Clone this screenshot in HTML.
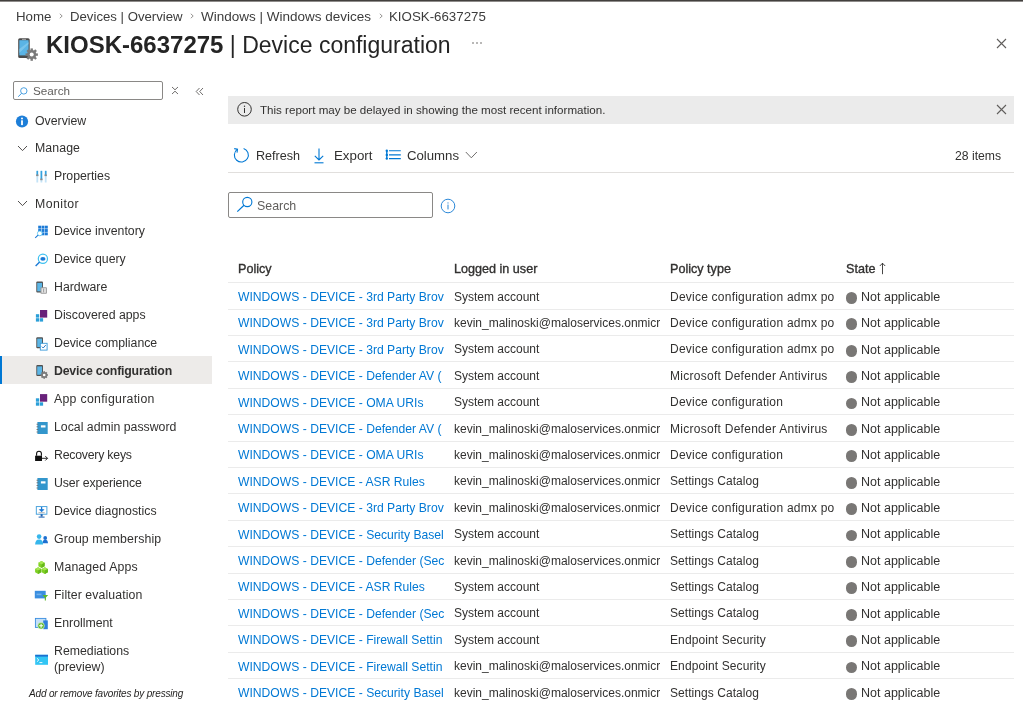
<!DOCTYPE html>
<html><head><meta charset="utf-8"><style>
html,body{-webkit-font-smoothing:antialiased;margin:0;padding:0;background:#fff;width:1023px;height:702px;overflow:hidden;position:relative;font-family:"Liberation Sans", sans-serif}
.t{will-change:transform;position:absolute;white-space:nowrap;line-height:1;font-family:"Liberation Sans", sans-serif}
svg{overflow:visible}
</style></head><body>
<div style="position:absolute;left:0px;top:0px;width:1023px;height:1px;background:#42403e;"></div>
<div style="position:absolute;left:0px;top:1px;width:1023px;height:1px;background:#8e8c8a;"></div>
<div class="t" style="left:16.40px;top:9.94px;font-size:13.3px;line-height:1.0;color:#3c3c3c;font-weight:normal;">Home</div>
<div class="t" style="left:70.20px;top:10.03px;font-size:13.2px;line-height:1.0;color:#3c3c3c;font-weight:normal;">Devices | Overview</div>
<div class="t" style="left:201.30px;top:9.77px;font-size:13.5px;line-height:1.0;color:#3c3c3c;font-weight:normal;">Windows | Windows devices</div>
<div class="t" style="left:389.00px;top:9.94px;font-size:13.3px;line-height:1.0;color:#3c3c3c;font-weight:normal;">KIOSK-6637275</div>
<svg style="position:absolute;left:57.5px;top:12px" width="6" height="8" viewBox="0 0 6 8"><path d="M1.8 1.8 L4.2 4 L1.8 6.2" fill="none" stroke="#8a8886" stroke-width="0.9"/></svg>
<svg style="position:absolute;left:189px;top:12px" width="6" height="8" viewBox="0 0 6 8"><path d="M1.8 1.8 L4.2 4 L1.8 6.2" fill="none" stroke="#8a8886" stroke-width="0.9"/></svg>
<svg style="position:absolute;left:377.5px;top:12px" width="6" height="8" viewBox="0 0 6 8"><path d="M1.8 1.8 L4.2 4 L1.8 6.2" fill="none" stroke="#8a8886" stroke-width="0.9"/></svg>
<div class="t" style="left:45.60px;top:33.33px;font-size:23.0px;line-height:1.0;color:#242424;font-weight:normal;"><b style="font-size:24px">KIOSK-6637275</b> | Device configuration</div>
<svg style="position:absolute;left:470px;top:40px" width="14" height="6" viewBox="0 0 14 6"><circle cx="3" cy="3" r="0.8" fill="#605e5c"/><circle cx="7" cy="3" r="0.8" fill="#605e5c"/><circle cx="11" cy="3" r="0.8" fill="#605e5c"/></svg>
<svg style="position:absolute;left:996px;top:38px" width="11" height="11" viewBox="0 0 11 11"><path d="M1 1 L10 10 M10 1 L1 10" stroke="#605e5c" stroke-width="1.1" fill="none"/></svg>
<svg style="position:absolute;left:16px;top:36px" width="18" height="24" viewBox="0 0 18 24">
<rect x="2.2" y="2.2" width="11.5" height="19.8" rx="1.6" fill="#4a4a4a"/>
<rect x="3.3" y="4.2" width="9.3" height="15.2" fill="#5ab4e5"/>
<path d="M3.3 13 L12.6 6 L12.6 8 L3.3 17 Z" fill="#8fd0f0" opacity="0.6"/>
<rect x="6" y="2.9" width="4" height="0.8" fill="#bbb"/>
<g transform="translate(15.7,18.6)">
<circle r="4.6" fill="#7a7a7a"/>
<g fill="#7a7a7a"><rect x="-1.2" y="-6.2" width="2.4" height="12.4"/><rect x="-1.2" y="-6.2" width="2.4" height="12.4" transform="rotate(45)"/><rect x="-1.2" y="-6.2" width="2.4" height="12.4" transform="rotate(90)"/><rect x="-1.2" y="-6.2" width="2.4" height="12.4" transform="rotate(135)"/></g>
<circle r="2" fill="#fff"/>
</g></svg>
<div style="position:absolute;left:13px;top:81px;width:149.5px;height:19px;background:#fff;box-sizing:border-box;border:1px solid #8a8886;border-radius:2px"></div>
<svg style="position:absolute;left:17px;top:84px" width="12" height="13" viewBox="0 0 12 13"><circle cx="6.8" cy="6.9" r="3.2" fill="none" stroke="#3a96dd" stroke-width="0.9"/><path d="M4.6 9.3 L1.2 12.7" stroke="#3a96dd" stroke-width="1"/></svg>
<div class="t" style="left:32.90px;top:85.30px;font-size:11.7px;line-height:1.0;color:#605e5c;font-weight:normal;">Search</div>
<svg style="position:absolute;left:171px;top:86px" width="8" height="9" viewBox="0 0 8 9"><path d="M1 1 L4 3.8 L7 1 M1 8 L4 5.2 L7 8" fill="none" stroke="#605e5c" stroke-width="0.9"/></svg>
<svg style="position:absolute;left:195px;top:87px" width="9" height="9" viewBox="0 0 9 9"><path d="M4.5 1 L1.2 4.5 L4.5 8 M8 1 L4.7 4.5 L8 8" fill="none" stroke="#605e5c" stroke-width="0.9"/></svg>
<div class="t" style="left:35.20px;top:115.39px;font-size:12.3px;line-height:1.0;color:#323130;font-weight:normal;">Overview</div>
<svg style="position:absolute;left:15px;top:115px" width="14" height="14" viewBox="0 0 14 14"><circle cx="7" cy="6.5" r="6.1" fill="#1d7ed8"/><rect x="6.1" y="5.3" width="1.8" height="4.8" fill="#fff"/><circle cx="7" cy="3.6" r="1" fill="#fff"/></svg>
<div class="t" style="left:35.00px;top:142.49px;font-size:12.3px;line-height:1.0;color:#323130;font-weight:normal;letter-spacing:0.1px">Manage</div>
<svg style="position:absolute;left:17px;top:145px" width="11" height="7" viewBox="0 0 11 7"><path d="M1 1 L5.5 5.6 L10 1" fill="none" stroke="#484644" stroke-width="0.95"/></svg>
<div class="t" style="left:35.00px;top:197.59px;font-size:12.3px;line-height:1.0;color:#323130;font-weight:normal;letter-spacing:0.45px">Monitor</div>
<svg style="position:absolute;left:17px;top:200px" width="11" height="7" viewBox="0 0 11 7"><path d="M1 1 L5.5 5.6 L10 1" fill="none" stroke="#484644" stroke-width="0.95"/></svg>
<div style="position:absolute;left:0px;top:356px;width:212px;height:28px;background:#edebe9;"></div>
<div style="position:absolute;left:0px;top:356px;width:2.2px;height:28px;background:#0078d4;"></div>
<div class="t" style="left:54.30px;top:170.39px;font-size:12.3px;line-height:1.0;color:#323130;font-weight:normal;letter-spacing:0px">Properties</div>
<div class="t" style="left:54.30px;top:225.39px;font-size:12.3px;line-height:1.0;color:#323130;font-weight:normal;letter-spacing:0px">Device inventory</div>
<div class="t" style="left:54.30px;top:253.39px;font-size:12.3px;line-height:1.0;color:#323130;font-weight:normal;letter-spacing:0px">Device query</div>
<div class="t" style="left:54.30px;top:281.39px;font-size:12.3px;line-height:1.0;color:#323130;font-weight:normal;letter-spacing:0px">Hardware</div>
<div class="t" style="left:54.30px;top:309.39px;font-size:12.3px;line-height:1.0;color:#323130;font-weight:normal;letter-spacing:0px">Discovered apps</div>
<div class="t" style="left:54.30px;top:337.39px;font-size:12.3px;line-height:1.0;color:#323130;font-weight:normal;letter-spacing:0px">Device compliance</div>
<div class="t" style="left:54.30px;top:365.39px;font-size:12.3px;line-height:1.0;color:#323130;font-weight:bold;letter-spacing:-0.18px">Device configuration</div>
<div class="t" style="left:54.30px;top:393.39px;font-size:12.3px;line-height:1.0;color:#323130;font-weight:normal;letter-spacing:0.29px">App configuration</div>
<div class="t" style="left:54.30px;top:421.39px;font-size:12.3px;line-height:1.0;color:#323130;font-weight:normal;letter-spacing:0px">Local admin password</div>
<div class="t" style="left:54.30px;top:449.39px;font-size:12.3px;line-height:1.0;color:#323130;font-weight:normal;letter-spacing:-0.22px">Recovery keys</div>
<div class="t" style="left:54.30px;top:477.39px;font-size:12.3px;line-height:1.0;color:#323130;font-weight:normal;letter-spacing:-0.12px">User experience</div>
<div class="t" style="left:54.30px;top:505.39px;font-size:12.3px;line-height:1.0;color:#323130;font-weight:normal;letter-spacing:0px">Device diagnostics</div>
<div class="t" style="left:54.30px;top:533.39px;font-size:12.3px;line-height:1.0;color:#323130;font-weight:normal;letter-spacing:0.13px">Group membership</div>
<div class="t" style="left:54.30px;top:561.39px;font-size:12.3px;line-height:1.0;color:#323130;font-weight:normal;letter-spacing:0.15px">Managed Apps</div>
<div class="t" style="left:54.30px;top:589.39px;font-size:12.3px;line-height:1.0;color:#323130;font-weight:normal;letter-spacing:0.09px">Filter evaluation</div>
<div class="t" style="left:54.30px;top:617.39px;font-size:12.3px;line-height:1.0;color:#323130;font-weight:normal;letter-spacing:0px">Enrollment</div>
<div class="t" style="left:54.30px;top:645.09px;font-size:12.3px;line-height:1.0;color:#323130;font-weight:normal;">Remediations</div>
<div class="t" style="left:54.30px;top:661.09px;font-size:12.3px;line-height:1.0;color:#323130;font-weight:normal;">(preview)</div>
<div class="t" style="left:29.40px;top:688.53px;font-size:10.0px;line-height:1.0;color:#201f1e;font-weight:normal;font-style:italic;letter-spacing:-0.17px">Add or remove favorites by pressing</div>
<svg style="position:absolute;left:0;top:0" width="220" height="702" viewBox="0 0 220 702"><rect x="36.4" y="171" width="1.8" height="11.5" fill="#c4e3f7"/><rect x="36.5" y="170.8" width="1.6" height="4.199999999999989" fill="#34a2de"/><rect x="36.099999999999994" y="174.5" width="2.4" height="1.6" fill="#8c8c8c"/><rect x="40.5" y="171" width="1.8" height="11.5" fill="#c4e3f7"/><rect x="40.6" y="170.8" width="1.6" height="8.299999999999983" fill="#34a2de"/><rect x="40.199999999999996" y="178.6" width="2.4" height="1.6" fill="#8c8c8c"/><rect x="44.800000000000004" y="171" width="1.8" height="11.5" fill="#c4e3f7"/><rect x="44.900000000000006" y="170.8" width="1.6" height="4.199999999999989" fill="#34a2de"/><rect x="44.5" y="174.5" width="2.4" height="1.6" fill="#8c8c8c"/><rect x="38.20" y="225.70" width="2.9" height="2.9" fill="#1c7ad6"/><rect x="38.20" y="229.05" width="2.9" height="2.9" fill="#1c7ad6"/><rect x="38.20" y="232.40" width="2.9" height="2.9" fill="#1c7ad6"/><rect x="41.55" y="225.70" width="2.9" height="2.9" fill="#1c7ad6"/><rect x="41.55" y="229.05" width="2.9" height="2.9" fill="#1c7ad6"/><rect x="41.55" y="232.40" width="2.9" height="2.9" fill="#1c7ad6"/><rect x="44.90" y="225.70" width="2.9" height="2.9" fill="#1c7ad6"/><rect x="44.90" y="229.05" width="2.9" height="2.9" fill="#1c7ad6"/><rect x="44.90" y="232.40" width="2.9" height="2.9" fill="#1c7ad6"/><circle cx="39.8" cy="233.4" r="2.4" fill="#fff" stroke="#50c0f0" stroke-width="0.8"/><path d="M38.1 235.1 L35.2 237.8" stroke="#1c7ad6" stroke-width="1.1"/><circle cx="42.9" cy="258.7" r="4.6" fill="#fff" stroke="#3fc1f0" stroke-width="1.2"/><ellipse cx="42.9" cy="258.9" rx="2.6" ry="1.8" fill="#1c7ad6"/><path d="M39.6 262.1 L35.6 266.1" stroke="#1c7ad6" stroke-width="1.4"/><rect x="36.3" y="281.5" width="6.7" height="11" rx="1" fill="#505050"/><rect x="37.199999999999996" y="282.9" width="4.9" height="8.4" fill="#5cb6e6"/><rect x="40.5" y="287.2" width="6.4" height="6.6" rx="0.8" fill="#9a9a9a"/><rect x="41.5" y="288.2" width="4.4" height="4.6" fill="#e6e6e6"/><rect x="43.3" y="288.6" width="0.8" height="3.8" fill="#888"/><rect x="40" y="310" width="7.2" height="7.6" fill="#68217a"/><rect x="35.9" y="314.2" width="3.3" height="3.4" fill="#2b9fd8"/><rect x="35.9" y="318.2" width="3.3" height="3.4" fill="#2b9fd8"/><rect x="39.8" y="318.2" width="3.3" height="3.4" fill="#2b9fd8"/><rect x="36.3" y="337.2" width="6.7" height="11" rx="1" fill="#505050"/><rect x="37.199999999999996" y="338.59999999999997" width="4.9" height="8.4" fill="#5cb6e6"/><rect x="40.3" y="343.3" width="6.8" height="6.8" fill="#fff" stroke="#3a9ad9" stroke-width="0.9"/><path d="M41.8 346.6 L43.2 348 L45.8 345" fill="none" stroke="#1c6fc0" stroke-width="0.9"/><rect x="36.3" y="365" width="6.7" height="11" rx="1" fill="#505050"/><rect x="37.199999999999996" y="366.4" width="4.9" height="8.4" fill="#5cb6e6"/><g transform="translate(44.2,375)" fill="#7a7a7a"><circle r="2.9"/><rect x="-0.81" y="-3.77" width="1.62" height="7.54" transform="rotate(0)"/><rect x="-0.81" y="-3.77" width="1.62" height="7.54" transform="rotate(45)"/><rect x="-0.81" y="-3.77" width="1.62" height="7.54" transform="rotate(90)"/><rect x="-0.81" y="-3.77" width="1.62" height="7.54" transform="rotate(135)"/><circle r="1.30" fill="#fff"/></g><rect x="40" y="394.1" width="7.2" height="7.6" fill="#68217a"/><rect x="35.9" y="398.3" width="3.3" height="3.4" fill="#2b9fd8"/><rect x="35.9" y="402.3" width="3.3" height="3.4" fill="#2b9fd8"/><rect x="39.8" y="402.3" width="3.3" height="3.4" fill="#2b9fd8"/><g transform="translate(0.6,0)"><rect x="36.8" y="422" width="10.3" height="12" fill="#3396cc"/><rect x="40.3" y="425.3" width="4.6" height="2.2" fill="#fff"/><rect x="35.9" y="423.80" width="1.8" height="0.8" fill="#666"/><rect x="35.9" y="426.40" width="1.8" height="0.8" fill="#666"/><rect x="35.9" y="429.00" width="1.8" height="0.8" fill="#666"/><rect x="35.9" y="431.60" width="1.8" height="0.8" fill="#666"/></g><path d="M36.6 455.8 L36.6 453.6 A2.4 2.4 0 0 1 41.4 453.6 L41.4 455.8" fill="none" stroke="#111" stroke-width="1.1"/><rect x="35.1" y="455.7" width="6.9" height="5.3" fill="#111"/><path d="M41 458.3 L47.5 458.3 M45.3 456.1 L47.5 458.3 L45.3 460.5" fill="none" stroke="#111" stroke-width="0.9"/><g transform="translate(0.6,0)"><rect x="36.8" y="478" width="10.3" height="12" fill="#3396cc"/><rect x="40.3" y="481.3" width="4.6" height="2.2" fill="#fff"/><rect x="35.9" y="479.80" width="1.8" height="0.8" fill="#666"/><rect x="35.9" y="482.40" width="1.8" height="0.8" fill="#666"/><rect x="35.9" y="485.00" width="1.8" height="0.8" fill="#666"/><rect x="35.9" y="487.60" width="1.8" height="0.8" fill="#666"/></g><rect x="36.3" y="506.6" width="10.6" height="7.6" fill="#fff" stroke="#3a9ad9" stroke-width="0.9"/><path d="M41.6 507 L41.6 511.2" stroke="#1c7ad6" stroke-width="1.3"/><path d="M39.4 509.6 L41.6 511.8 L43.8 509.6 Z" fill="#1c7ad6" stroke="#1c7ad6" stroke-width="0.8"/><rect x="38.5" y="512.4" width="6.2" height="0.7" fill="#999"/><rect x="40.6" y="514.2" width="2" height="2.4" fill="#1c5fb0"/><rect x="38.6" y="516.6" width="6" height="1" fill="#1c5fb0"/><circle cx="45.2" cy="538" r="1.9" fill="#1c6fd0"/><path d="M42.4 543.2 Q42.6 539.8 45.2 539.8 Q47.9 539.8 48 543.2 Z" fill="#1c6fd0"/><circle cx="39.1" cy="536.6" r="2.3" fill="#36b6ec"/><path d="M35.1 544.6 Q35.2 539.4 39.1 539.4 Q43 539.4 43.1 544.6 Z" fill="#36b6ec"/><path d="M41.5 561.1 L44.6 562.8000000000001 L44.6 566.1999999999999 L41.5 567.9 L38.4 566.1999999999999 L38.4 562.8000000000001 Z" fill="#7fd024"/><path d="M41.5 561.1 L44.6 562.8000000000001 L41.5 564.5 L38.4 562.8000000000001 Z" fill="#a6e652"/><path d="M44.6 562.8000000000001 L44.6 566.1999999999999 L41.5 567.9 L41.5 564.5 Z" fill="#66b81a"/><path d="M38.2 567.2 L41.300000000000004 568.9000000000001 L41.300000000000004 572.3 L38.2 574.0 L35.1 572.3 L35.1 568.9000000000001 Z" fill="#7fd024"/><path d="M38.2 567.2 L41.300000000000004 568.9000000000001 L38.2 570.6 L35.1 568.9000000000001 Z" fill="#a6e652"/><path d="M41.300000000000004 568.9000000000001 L41.300000000000004 572.3 L38.2 574.0 L38.2 570.6 Z" fill="#66b81a"/><path d="M44.800000000000004 567.2 L47.900000000000006 568.9000000000001 L47.900000000000006 572.3 L44.800000000000004 574.0 L41.7 572.3 L41.7 568.9000000000001 Z" fill="#7fd024"/><path d="M44.800000000000004 567.2 L47.900000000000006 568.9000000000001 L44.800000000000004 570.6 L41.7 568.9000000000001 Z" fill="#a6e652"/><path d="M47.900000000000006 568.9000000000001 L47.900000000000006 572.3 L44.800000000000004 574.0 L44.800000000000004 570.6 Z" fill="#66b81a"/><rect x="34.8" y="590.8" width="10.9" height="7.6" fill="#3a8ee0"/><rect x="36.5" y="593.6" width="5" height="1.6" fill="#8cc0f0" opacity="0.7"/><path d="M42.5 595 L48.2 595 L45.9 597.6 L45.9 600.4 L44.8 600.4 L44.8 597.6 Z" fill="#5cb82a"/><g transform="translate(0.6,0.6)"><rect x="34.8" y="617.8" width="10.5" height="9" fill="#c4e0f8" stroke="#3a8ee0" stroke-width="0.9"/><rect x="42.6" y="619.8" width="4.6" height="8.8" fill="#2f80dc"/><circle cx="40.5" cy="625.2" r="3.3" fill="#5cb82a" stroke="#e8f5e0" stroke-width="0.6"/><path d="M40.5 623.2 L40.5 627.2 M38.5 625.2 L42.5 625.2" stroke="#fff" stroke-width="1.1"/></g><rect x="35.2" y="654.8" width="12.8" height="10" fill="#32c5f4"/><rect x="35.2" y="654.8" width="12.8" height="1.8" fill="#1c6fd0"/><path d="M36.9 658.2 L38.8 660 L36.9 661.8 M39.4 662.6 L42.4 662.6" fill="none" stroke="#fff" stroke-width="0.9"/></svg>
<div style="position:absolute;left:228px;top:96px;width:786px;height:28px;background:#ebebeb;"></div>
<svg style="position:absolute;left:236px;top:101px" width="17" height="17" viewBox="0 0 17 17"><circle cx="8.5" cy="8.3" r="6.8" fill="none" stroke="#323130" stroke-width="1"/><rect x="8" y="7" width="1" height="5" fill="#323130"/><circle cx="8.5" cy="5.3" r="0.7" fill="#323130"/></svg>
<div class="t" style="left:259.60px;top:104.38px;font-size:11.6px;line-height:1.0;color:#323130;font-weight:normal;">This report may be delayed in showing the most recent information.</div>
<svg style="position:absolute;left:996px;top:104px" width="11" height="11" viewBox="0 0 11 11"><path d="M1 1 L10 10 M10 1 L1 10" stroke="#605e5c" stroke-width="1.1" fill="none"/></svg>
<svg style="position:absolute;left:232.3px;top:146.3px" width="18" height="17" viewBox="0 0 18 17"><path d="M5.2 3.4 A7 7 0 1 0 11.6 2.4" fill="none" stroke="#0078d4" stroke-width="1.1"/><path d="M2.2 2.6 L5.5 3.3 L5 6.6" fill="none" stroke="#0078d4" stroke-width="1.1"/></svg>
<div class="t" style="left:255.80px;top:149.83px;font-size:12.6px;line-height:1.0;color:#323130;font-weight:normal;">Refresh</div>
<svg style="position:absolute;left:312px;top:146.5px" width="14" height="17" viewBox="0 0 14 17"><path d="M7 1.5 L7 13 M2.8 8.8 L7 13 L11.2 8.8" fill="none" stroke="#0078d4" stroke-width="1.1"/><path d="M2.5 15.8 L11.5 15.8" stroke="#0078d4" stroke-width="1.1"/></svg>
<div class="t" style="left:333.80px;top:149.24px;font-size:13.3px;line-height:1.0;color:#323130;font-weight:normal;">Export</div>
<svg style="position:absolute;left:384px;top:148px" width="18" height="13" viewBox="0 0 18 13"><path d="M5 2.8 L16.8 2.8 M5 6.9 L16.8 6.9 M5 10.6 L16.8 10.6" stroke="#0078d4" stroke-width="1.1"/><circle cx="2.8" cy="2.8" r="1.2" fill="#0078d4"/><circle cx="2.8" cy="6.9" r="1.2" fill="#0078d4"/><circle cx="2.8" cy="10.6" r="1.2" fill="#0078d4"/><path d="M2.8 2.8 L2.8 10.6" stroke="#0078d4" stroke-width="1.4"/></svg>
<div class="t" style="left:407.30px;top:149.03px;font-size:13.2px;line-height:1.0;color:#323130;font-weight:normal;">Columns</div>
<svg style="position:absolute;left:464px;top:150px" width="14" height="9" viewBox="0 0 14 9"><path d="M1.8 2 L7.3 7.8 L12.9 2" fill="none" stroke="#605e5c" stroke-width="0.9"/></svg>
<div class="t" style="left:955.00px;top:149.67px;font-size:12.2px;line-height:1.0;color:#323130;font-weight:normal;">28 items</div>
<div style="position:absolute;left:228px;top:172px;width:786px;height:1px;background:#e1dfdd;"></div>
<div style="position:absolute;left:228px;top:192px;width:205px;height:26px;background:#fff;box-sizing:border-box;border:1px solid #8a8886;border-radius:2px"></div>
<svg style="position:absolute;left:236px;top:196px" width="18" height="17" viewBox="0 0 18 17"><circle cx="11.3" cy="6" r="4.6" fill="none" stroke="#0078d4" stroke-width="1.1"/><path d="M8 9.3 L1.3 15.6" stroke="#0078d4" stroke-width="1.2"/></svg>
<div class="t" style="left:257.30px;top:200.10px;font-size:12.4px;line-height:1.0;color:#605e5c;font-weight:normal;">Search</div>
<svg style="position:absolute;left:440px;top:197.5px" width="16" height="16" viewBox="0 0 16 16"><circle cx="8" cy="8" r="6.8" fill="none" stroke="#2b88d8" stroke-width="1"/><rect x="7.5" y="6.6" width="1" height="4.8" fill="#2b88d8"/><circle cx="8" cy="4.9" r="0.6" fill="#2b88d8"/></svg>
<div class="t" style="left:238.10px;top:263.13px;font-size:12.6px;line-height:1.0;color:#323130;font-weight:normal;-webkit-text-stroke:0.35px #323130">Policy</div>
<div class="t" style="left:454.00px;top:263.13px;font-size:12.6px;line-height:1.0;color:#323130;font-weight:normal;-webkit-text-stroke:0.35px #323130">Logged in user</div>
<div class="t" style="left:670.30px;top:263.13px;font-size:12.6px;line-height:1.0;color:#323130;font-weight:normal;-webkit-text-stroke:0.35px #323130">Policy type</div>
<div class="t" style="left:846.00px;top:263.13px;font-size:12.6px;line-height:1.0;color:#323130;font-weight:normal;-webkit-text-stroke:0.35px #323130">State</div>
<svg style="position:absolute;left:877px;top:261px" width="10" height="14" viewBox="0 0 10 14"><path d="M5.5 2 L5.5 13.2 M2.8 5 L5.5 2.2 L8.2 5" fill="none" stroke="#323130" stroke-width="0.9"/></svg>
<div style="position:absolute;left:228px;top:282.10px;width:786px;height:1px;background:#ebebeb"></div>
<div style="position:absolute;left:228px;top:308.50px;width:786px;height:1px;background:#ebebeb"></div>
<div class="t" style="left:238.20px;top:288.03px;font-size:12.15px;line-height:1.5;color:#0078d4;font-weight:normal;width:207px;overflow:hidden">WINDOWS - DEVICE - 3rd Party Brov</div>
<div class="t" style="left:453.50px;top:287.59px;font-size:12.0px;line-height:1.5;color:#323130;font-weight:normal;width:206px;overflow:hidden">System account</div>
<div class="t" style="left:669.60px;top:287.59px;font-size:12.0px;line-height:1.5;color:#323130;font-weight:normal;width:165px;overflow:hidden;letter-spacing:0.23px">Device configuration admx po</div>
<div style="position:absolute;left:845.6px;top:292.05px;width:11.7px;height:11.7px;border-radius:50%;background:#797775"></div>
<div class="t" style="left:860.50px;top:290.77px;font-size:12.5px;line-height:1.0;color:#323130;font-weight:normal;">Not applicable</div>
<div style="position:absolute;left:228px;top:334.90px;width:786px;height:1px;background:#ebebeb"></div>
<div class="t" style="left:238.20px;top:314.43px;font-size:12.15px;line-height:1.5;color:#0078d4;font-weight:normal;width:207px;overflow:hidden">WINDOWS - DEVICE - 3rd Party Brov</div>
<div class="t" style="left:453.50px;top:313.99px;font-size:12.0px;line-height:1.5;color:#323130;font-weight:normal;width:206px;overflow:hidden">kevin_malinoski@maloservices.onmicrosoft.com</div>
<div class="t" style="left:669.60px;top:313.99px;font-size:12.0px;line-height:1.5;color:#323130;font-weight:normal;width:165px;overflow:hidden;letter-spacing:0.23px">Device configuration admx po</div>
<div style="position:absolute;left:845.6px;top:318.45px;width:11.7px;height:11.7px;border-radius:50%;background:#797775"></div>
<div class="t" style="left:860.50px;top:317.17px;font-size:12.5px;line-height:1.0;color:#323130;font-weight:normal;">Not applicable</div>
<div style="position:absolute;left:228px;top:361.30px;width:786px;height:1px;background:#ebebeb"></div>
<div class="t" style="left:238.20px;top:340.83px;font-size:12.15px;line-height:1.5;color:#0078d4;font-weight:normal;width:207px;overflow:hidden">WINDOWS - DEVICE - 3rd Party Brov</div>
<div class="t" style="left:453.50px;top:340.39px;font-size:12.0px;line-height:1.5;color:#323130;font-weight:normal;width:206px;overflow:hidden">System account</div>
<div class="t" style="left:669.60px;top:340.39px;font-size:12.0px;line-height:1.5;color:#323130;font-weight:normal;width:165px;overflow:hidden;letter-spacing:0.23px">Device configuration admx po</div>
<div style="position:absolute;left:845.6px;top:344.85px;width:11.7px;height:11.7px;border-radius:50%;background:#797775"></div>
<div class="t" style="left:860.50px;top:343.57px;font-size:12.5px;line-height:1.0;color:#323130;font-weight:normal;">Not applicable</div>
<div style="position:absolute;left:228px;top:387.70px;width:786px;height:1px;background:#ebebeb"></div>
<div class="t" style="left:238.20px;top:367.23px;font-size:12.15px;line-height:1.5;color:#0078d4;font-weight:normal;width:207px;overflow:hidden">WINDOWS - DEVICE - Defender AV (</div>
<div class="t" style="left:453.50px;top:366.79px;font-size:12.0px;line-height:1.5;color:#323130;font-weight:normal;width:206px;overflow:hidden">System account</div>
<div class="t" style="left:669.60px;top:366.79px;font-size:12.0px;line-height:1.5;color:#323130;font-weight:normal;width:165px;overflow:hidden;letter-spacing:0.27px">Microsoft Defender Antivirus</div>
<div style="position:absolute;left:845.6px;top:371.25px;width:11.7px;height:11.7px;border-radius:50%;background:#797775"></div>
<div class="t" style="left:860.50px;top:369.97px;font-size:12.5px;line-height:1.0;color:#323130;font-weight:normal;">Not applicable</div>
<div style="position:absolute;left:228px;top:414.10px;width:786px;height:1px;background:#ebebeb"></div>
<div class="t" style="left:238.20px;top:393.63px;font-size:12.15px;line-height:1.5;color:#0078d4;font-weight:normal;width:207px;overflow:hidden">WINDOWS - DEVICE - OMA URIs</div>
<div class="t" style="left:453.50px;top:393.19px;font-size:12.0px;line-height:1.5;color:#323130;font-weight:normal;width:206px;overflow:hidden">System account</div>
<div class="t" style="left:669.60px;top:393.19px;font-size:12.0px;line-height:1.5;color:#323130;font-weight:normal;width:165px;overflow:hidden;letter-spacing:0.22px">Device configuration</div>
<div style="position:absolute;left:845.6px;top:397.65px;width:11.7px;height:11.7px;border-radius:50%;background:#797775"></div>
<div class="t" style="left:860.50px;top:396.37px;font-size:12.5px;line-height:1.0;color:#323130;font-weight:normal;">Not applicable</div>
<div style="position:absolute;left:228px;top:440.50px;width:786px;height:1px;background:#ebebeb"></div>
<div class="t" style="left:238.20px;top:420.03px;font-size:12.15px;line-height:1.5;color:#0078d4;font-weight:normal;width:207px;overflow:hidden">WINDOWS - DEVICE - Defender AV (</div>
<div class="t" style="left:453.50px;top:419.59px;font-size:12.0px;line-height:1.5;color:#323130;font-weight:normal;width:206px;overflow:hidden">kevin_malinoski@maloservices.onmicrosoft.com</div>
<div class="t" style="left:669.60px;top:419.59px;font-size:12.0px;line-height:1.5;color:#323130;font-weight:normal;width:165px;overflow:hidden;letter-spacing:0.27px">Microsoft Defender Antivirus</div>
<div style="position:absolute;left:845.6px;top:424.05px;width:11.7px;height:11.7px;border-radius:50%;background:#797775"></div>
<div class="t" style="left:860.50px;top:422.77px;font-size:12.5px;line-height:1.0;color:#323130;font-weight:normal;">Not applicable</div>
<div style="position:absolute;left:228px;top:466.90px;width:786px;height:1px;background:#ebebeb"></div>
<div class="t" style="left:238.20px;top:446.43px;font-size:12.15px;line-height:1.5;color:#0078d4;font-weight:normal;width:207px;overflow:hidden">WINDOWS - DEVICE - OMA URIs</div>
<div class="t" style="left:453.50px;top:445.99px;font-size:12.0px;line-height:1.5;color:#323130;font-weight:normal;width:206px;overflow:hidden">kevin_malinoski@maloservices.onmicrosoft.com</div>
<div class="t" style="left:669.60px;top:445.99px;font-size:12.0px;line-height:1.5;color:#323130;font-weight:normal;width:165px;overflow:hidden;letter-spacing:0.22px">Device configuration</div>
<div style="position:absolute;left:845.6px;top:450.45px;width:11.7px;height:11.7px;border-radius:50%;background:#797775"></div>
<div class="t" style="left:860.50px;top:449.17px;font-size:12.5px;line-height:1.0;color:#323130;font-weight:normal;">Not applicable</div>
<div style="position:absolute;left:228px;top:493.30px;width:786px;height:1px;background:#ebebeb"></div>
<div class="t" style="left:238.20px;top:472.83px;font-size:12.15px;line-height:1.5;color:#0078d4;font-weight:normal;width:207px;overflow:hidden">WINDOWS - DEVICE - ASR Rules</div>
<div class="t" style="left:453.50px;top:472.39px;font-size:12.0px;line-height:1.5;color:#323130;font-weight:normal;width:206px;overflow:hidden">kevin_malinoski@maloservices.onmicrosoft.com</div>
<div class="t" style="left:669.60px;top:472.39px;font-size:12.0px;line-height:1.5;color:#323130;font-weight:normal;width:165px;overflow:hidden;letter-spacing:0.06px">Settings Catalog</div>
<div style="position:absolute;left:845.6px;top:476.85px;width:11.7px;height:11.7px;border-radius:50%;background:#797775"></div>
<div class="t" style="left:860.50px;top:475.57px;font-size:12.5px;line-height:1.0;color:#323130;font-weight:normal;">Not applicable</div>
<div style="position:absolute;left:228px;top:519.70px;width:786px;height:1px;background:#ebebeb"></div>
<div class="t" style="left:238.20px;top:499.23px;font-size:12.15px;line-height:1.5;color:#0078d4;font-weight:normal;width:207px;overflow:hidden">WINDOWS - DEVICE - 3rd Party Brov</div>
<div class="t" style="left:453.50px;top:498.79px;font-size:12.0px;line-height:1.5;color:#323130;font-weight:normal;width:206px;overflow:hidden">kevin_malinoski@maloservices.onmicrosoft.com</div>
<div class="t" style="left:669.60px;top:498.79px;font-size:12.0px;line-height:1.5;color:#323130;font-weight:normal;width:165px;overflow:hidden;letter-spacing:0.23px">Device configuration admx po</div>
<div style="position:absolute;left:845.6px;top:503.25px;width:11.7px;height:11.7px;border-radius:50%;background:#797775"></div>
<div class="t" style="left:860.50px;top:501.97px;font-size:12.5px;line-height:1.0;color:#323130;font-weight:normal;">Not applicable</div>
<div style="position:absolute;left:228px;top:546.10px;width:786px;height:1px;background:#ebebeb"></div>
<div class="t" style="left:238.20px;top:525.63px;font-size:12.15px;line-height:1.5;color:#0078d4;font-weight:normal;width:207px;overflow:hidden">WINDOWS - DEVICE - Security Basel</div>
<div class="t" style="left:453.50px;top:525.19px;font-size:12.0px;line-height:1.5;color:#323130;font-weight:normal;width:206px;overflow:hidden">System account</div>
<div class="t" style="left:669.60px;top:525.19px;font-size:12.0px;line-height:1.5;color:#323130;font-weight:normal;width:165px;overflow:hidden;letter-spacing:0.06px">Settings Catalog</div>
<div style="position:absolute;left:845.6px;top:529.65px;width:11.7px;height:11.7px;border-radius:50%;background:#797775"></div>
<div class="t" style="left:860.50px;top:528.37px;font-size:12.5px;line-height:1.0;color:#323130;font-weight:normal;">Not applicable</div>
<div style="position:absolute;left:228px;top:572.50px;width:786px;height:1px;background:#ebebeb"></div>
<div class="t" style="left:238.20px;top:552.03px;font-size:12.15px;line-height:1.5;color:#0078d4;font-weight:normal;width:207px;overflow:hidden">WINDOWS - DEVICE - Defender (Sec</div>
<div class="t" style="left:453.50px;top:551.59px;font-size:12.0px;line-height:1.5;color:#323130;font-weight:normal;width:206px;overflow:hidden">kevin_malinoski@maloservices.onmicrosoft.com</div>
<div class="t" style="left:669.60px;top:551.59px;font-size:12.0px;line-height:1.5;color:#323130;font-weight:normal;width:165px;overflow:hidden;letter-spacing:0.06px">Settings Catalog</div>
<div style="position:absolute;left:845.6px;top:556.05px;width:11.7px;height:11.7px;border-radius:50%;background:#797775"></div>
<div class="t" style="left:860.50px;top:554.77px;font-size:12.5px;line-height:1.0;color:#323130;font-weight:normal;">Not applicable</div>
<div style="position:absolute;left:228px;top:598.90px;width:786px;height:1px;background:#ebebeb"></div>
<div class="t" style="left:238.20px;top:578.43px;font-size:12.15px;line-height:1.5;color:#0078d4;font-weight:normal;width:207px;overflow:hidden">WINDOWS - DEVICE - ASR Rules</div>
<div class="t" style="left:453.50px;top:577.99px;font-size:12.0px;line-height:1.5;color:#323130;font-weight:normal;width:206px;overflow:hidden">System account</div>
<div class="t" style="left:669.60px;top:577.99px;font-size:12.0px;line-height:1.5;color:#323130;font-weight:normal;width:165px;overflow:hidden;letter-spacing:0.06px">Settings Catalog</div>
<div style="position:absolute;left:845.6px;top:582.45px;width:11.7px;height:11.7px;border-radius:50%;background:#797775"></div>
<div class="t" style="left:860.50px;top:581.17px;font-size:12.5px;line-height:1.0;color:#323130;font-weight:normal;">Not applicable</div>
<div style="position:absolute;left:228px;top:625.30px;width:786px;height:1px;background:#ebebeb"></div>
<div class="t" style="left:238.20px;top:604.83px;font-size:12.15px;line-height:1.5;color:#0078d4;font-weight:normal;width:207px;overflow:hidden">WINDOWS - DEVICE - Defender (Sec</div>
<div class="t" style="left:453.50px;top:604.39px;font-size:12.0px;line-height:1.5;color:#323130;font-weight:normal;width:206px;overflow:hidden">System account</div>
<div class="t" style="left:669.60px;top:604.39px;font-size:12.0px;line-height:1.5;color:#323130;font-weight:normal;width:165px;overflow:hidden;letter-spacing:0.06px">Settings Catalog</div>
<div style="position:absolute;left:845.6px;top:608.85px;width:11.7px;height:11.7px;border-radius:50%;background:#797775"></div>
<div class="t" style="left:860.50px;top:607.57px;font-size:12.5px;line-height:1.0;color:#323130;font-weight:normal;">Not applicable</div>
<div style="position:absolute;left:228px;top:651.70px;width:786px;height:1px;background:#ebebeb"></div>
<div class="t" style="left:238.20px;top:631.23px;font-size:12.15px;line-height:1.5;color:#0078d4;font-weight:normal;width:207px;overflow:hidden">WINDOWS - DEVICE - Firewall Settin</div>
<div class="t" style="left:453.50px;top:630.79px;font-size:12.0px;line-height:1.5;color:#323130;font-weight:normal;width:206px;overflow:hidden">System account</div>
<div class="t" style="left:669.60px;top:630.79px;font-size:12.0px;line-height:1.5;color:#323130;font-weight:normal;width:165px;overflow:hidden;letter-spacing:0.11px">Endpoint Security</div>
<div style="position:absolute;left:845.6px;top:635.25px;width:11.7px;height:11.7px;border-radius:50%;background:#797775"></div>
<div class="t" style="left:860.50px;top:633.97px;font-size:12.5px;line-height:1.0;color:#323130;font-weight:normal;">Not applicable</div>
<div style="position:absolute;left:228px;top:678.10px;width:786px;height:1px;background:#ebebeb"></div>
<div class="t" style="left:238.20px;top:657.63px;font-size:12.15px;line-height:1.5;color:#0078d4;font-weight:normal;width:207px;overflow:hidden">WINDOWS - DEVICE - Firewall Settin</div>
<div class="t" style="left:453.50px;top:657.19px;font-size:12.0px;line-height:1.5;color:#323130;font-weight:normal;width:206px;overflow:hidden">kevin_malinoski@maloservices.onmicrosoft.com</div>
<div class="t" style="left:669.60px;top:657.19px;font-size:12.0px;line-height:1.5;color:#323130;font-weight:normal;width:165px;overflow:hidden;letter-spacing:0.11px">Endpoint Security</div>
<div style="position:absolute;left:845.6px;top:661.65px;width:11.7px;height:11.7px;border-radius:50%;background:#797775"></div>
<div class="t" style="left:860.50px;top:660.37px;font-size:12.5px;line-height:1.0;color:#323130;font-weight:normal;">Not applicable</div>
<div style="position:absolute;left:228px;top:704.50px;width:786px;height:1px;background:#ebebeb"></div>
<div class="t" style="left:238.20px;top:684.03px;font-size:12.15px;line-height:1.5;color:#0078d4;font-weight:normal;width:207px;overflow:hidden">WINDOWS - DEVICE - Security Basel</div>
<div class="t" style="left:453.50px;top:683.59px;font-size:12.0px;line-height:1.5;color:#323130;font-weight:normal;width:206px;overflow:hidden">kevin_malinoski@maloservices.onmicrosoft.com</div>
<div class="t" style="left:669.60px;top:683.59px;font-size:12.0px;line-height:1.5;color:#323130;font-weight:normal;width:165px;overflow:hidden;letter-spacing:0.06px">Settings Catalog</div>
<div style="position:absolute;left:845.6px;top:688.05px;width:11.7px;height:11.7px;border-radius:50%;background:#797775"></div>
<div class="t" style="left:860.50px;top:686.77px;font-size:12.5px;line-height:1.0;color:#323130;font-weight:normal;">Not applicable</div>
</body></html>
